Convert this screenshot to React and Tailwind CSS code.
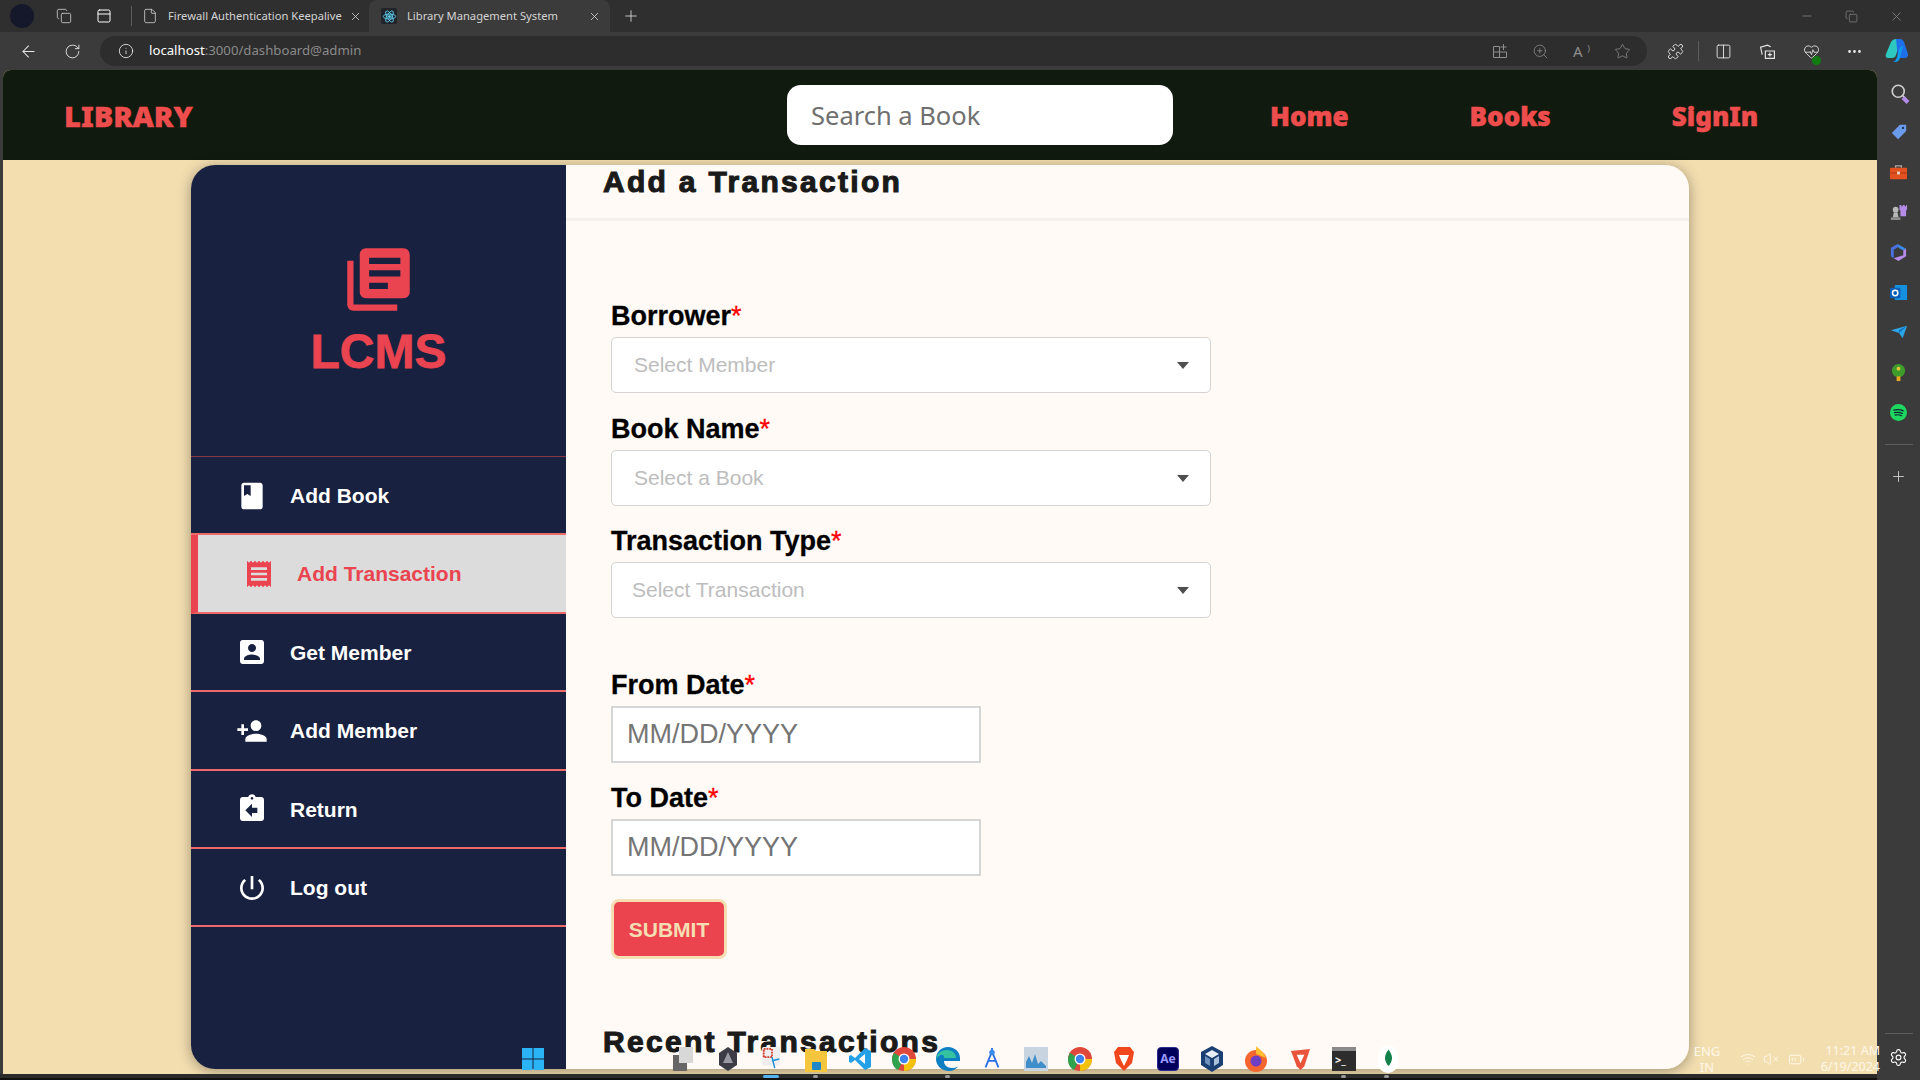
import React from "react";
import { ArrowLeft, RotateCw, Info, ZoomIn, Star, Puzzle, Columns2, HeartPulse, MoreHorizontal, Minus, X, Plus, File, PanelTop, Copy, Search, Wifi, VolumeX, BatteryMedium, Settings } from "lucide-react";

const P = {
  libraryBooks: "M4 6H2v14c0 1.1.9 2 2 2h14v-2H4V6zm16-4H8c-1.1 0-2 .9-2 2v12c0 1.1.9 2 2 2h12c1.1 0 2-.9 2-2V4c0-1.1-.9-2-2-2zm-1 9H9V9h10v2zm-4 4H9v-2h6v2zm4-8H9V5h10v2z",
  book: "M18 2H6c-1.1 0-2 .9-2 2v16c0 1.1.9 2 2 2h12c1.1 0 2-.9 2-2V4c0-1.1-.9-2-2-2zM6 4h5v8l-2.5-1.5L6 12V4z",
  receipt: "M18 17H6v-2h12v2zm0-4H6v-2h12v2zm0-4H6V7h12v2zM3 22l1.5-1.5L6 22l1.5-1.5L9 22l1.5-1.5L12 22l1.5-1.5L15 22l1.5-1.5L18 22l1.5-1.5L21 22V2l-1.5 1.5L18 2l-1.5 1.5L15 2l-1.5 1.5L12 2l-1.5 1.5L9 2 7.5 3.5 6 2 4.5 3.5 3 2v20z",
  accountBox: "M3 5v14c0 1.1.89 2 2 2h14c1.1 0 2-.9 2-2V5c0-1.1-.9-2-2-2H5c-1.11 0-2 .9-2 2zm12 4c0 1.66-1.34 3-3 3s-3-1.34-3-3 1.34-3 3-3 3 1.34 3 3zm-9 8c0-2 4-3.1 6-3.1s6 1.1 6 3.1v1H6v-1z",
  personAdd: "M15 12c2.21 0 4-1.79 4-4s-1.79-4-4-4-4 1.79-4 4 1.79 4 4 4zm-9-2V7H4v3H1v2h3v3h2v-3h3v-2H6zm9 4c-2.67 0-8 1.34-8 4v2h16v-2c0-2.66-5.33-4-8-4z",
  assignmentReturn: "M19 3h-4.18C14.4 1.84 13.3 1 12 1c-1.3 0-2.4.84-2.82 2H5c-1.1 0-2 .9-2 2v14c0 1.1.9 2 2 2h14c1.1 0 2-.9 2-2V5c0-1.1-.9-2-2-2zm-7 0c.55 0 1 .45 1 1s-.45 1-1 1-1-.45-1-1 .45-1 1-1zm4 12h-4v3l-5-5 5-5v3h4v4z",
  power: "M13 3h-2v10h2V3zm4.83 2.17l-1.42 1.42C17.99 7.86 19 9.81 19 12c0 3.87-3.13 7-7 7s-7-3.13-7-7c0-2.19 1.01-4.14 2.58-5.42L6.17 5.17C4.23 6.82 3 9.26 3 12c0 4.97 4.03 9 9 9s9-4.03 9-9c0-2.74-1.23-5.18-3.17-6.83z",
};

function Mi({ d, className }) {
  return (
    <svg viewBox="0 0 24 24" className={className} fill="currentColor" aria-hidden="true">
      <path d={d} />
    </svg>
  );
}

function Chrome({ children, className }) {
  return <div className={"flex items-center justify-center shrink-0 " + className}>{children}</div>;
}

function TopBar() {
  return (
    <div className="h-8 flex items-stretch bg-[#2f2f2f] text-[#d4d4d4] font-['Noto_Sans',sans-serif] text-[11.2px] shrink-0">
      <div className="w-[44px] flex items-center justify-center">
        <div className="w-[24px] h-[24px] rounded-full bg-[#14182a]" />
      </div>
      <Chrome className="w-[40px]"><Copy size={16} strokeWidth={1.2} /></Chrome>
      <Chrome className="w-[44px] ml-[-2px]"><PanelTop size={16} strokeWidth={1.5} className="text-white" /></Chrome>
      <div className="w-px h-[20px] bg-[#5c5c5c] self-center ml-[5px]" />
      <Chrome className="w-[36px]"><File size={16} strokeWidth={1.2} /></Chrome>
      <div className="w-[173px] whitespace-nowrap self-center">Firewall Authentication Keepalive</div>
      <Chrome className="w-[28px]"><X size={13} strokeWidth={1.5} /></Chrome>
      <div className="w-[241px] bg-[#3b3b3b] rounded-t-[8px] flex items-center">
        <div className="w-[16px] h-[16px] ml-[12px] bg-[#20232a] rounded-[2px] flex items-center justify-center">
          <svg viewBox="0 0 24 24" className="w-[15px] h-[15px]" fill="none" stroke="#61dafb" strokeWidth="1.3">
            <ellipse cx="12" cy="12" rx="10" ry="4" />
            <ellipse cx="12" cy="12" rx="10" ry="4" transform="rotate(60 12 12)" />
            <ellipse cx="12" cy="12" rx="10" ry="4" transform="rotate(120 12 12)" />
            <circle cx="12" cy="12" r="1.8" fill="#61dafb" />
          </svg>
        </div>
        <div className="ml-[10px] w-[181px] whitespace-nowrap">Library Management System</div>
        <X size={13} strokeWidth={1.5} />
      </div>
      <Chrome className="w-[42px]"><Plus size={18} strokeWidth={1.2} /></Chrome>
      <div className="flex-1" />
      <div className="flex items-center pr-[16px] text-[#8d8d8d]">
        <Minus size={14} strokeWidth={1.2} />
        <Copy size={13} strokeWidth={1.2} className="ml-[31px]" />
        <X size={15} strokeWidth={1.2} className="ml-[31px]" />
      </div>
    </div>
  );
}

function AddressBar() {
  return (
    <div className="h-[38px] flex items-center bg-[#3b3b3b] text-[#e6e6e6] shrink-0 font-['Noto_Sans',sans-serif]">
      <Chrome className="w-[44px] ml-[6px]"><ArrowLeft size={19} strokeWidth={1.3} /></Chrome>
      <Chrome className="w-[44px]"><RotateCw size={17} strokeWidth={1.3} /></Chrome>
      <div className="ml-[6px] w-[1547px] h-[30px] rounded-full bg-[#2d2d2d] flex items-center">
        <Info size={16} strokeWidth={1.3} className="ml-[18px]" />
        <div className="ml-[15px] text-[13.2px] whitespace-nowrap">
          <span className="text-white">localhost</span>
          <span className="text-[#8a8a8a]">:3000/dashboard@admin</span>
        </div>
        <div className="flex-1" />
        <div className="flex items-center text-[#8e8e8e] pr-[16px] gap-[24px]">
          <svg viewBox="0 0 16 16" className="w-[16px] h-[16px]" fill="none" stroke="currentColor" strokeWidth="1">
            <path d="M1.5 3.5h6v11h-6zM1.5 9h13v5.5h-7M7.5 9v5.5M11.5 1v6M8.500 4h6" />
          </svg>
          <ZoomIn size={17} strokeWidth={1.1} />
          <span className="relative w-[17px] h-[17px] text-[15px] leading-[17px]">
            A<span className="absolute right-0 top-[-3px] text-[9px]">)</span>
          </span>
          <Star size={17} strokeWidth={1.1} />
        </div>
      </div>
      <Chrome className="w-[20px] ml-[18px]"><Puzzle size={17} strokeWidth={1.3} /></Chrome>
      <div className="w-px h-[20px] bg-[#5c5c5c] ml-[13px]" />
      <Chrome className="w-[20px] ml-[14px]"><Columns2 size={17} strokeWidth={1.3} /></Chrome>
      <Chrome className="w-[20px] ml-[24px]">
        <svg viewBox="0 0 16 16" className="w-[17px] h-[17px]" fill="none" stroke="currentColor" strokeWidth="1.1">
          <path d="M3 11 1.5 4 8 2l3 1.5M6 7.5h8.5v7H6zM10.2 9v3.8M8.3 11h3.8" />
        </svg>
      </Chrome>
      <Chrome className="w-[20px] ml-[24px] relative">
        <HeartPulse size={17} strokeWidth={1.2} />
        <span className="absolute right-[0px] bottom-[-5px] w-[9px] h-[9px] rounded-full bg-[#107c10]" />
      </Chrome>
      <Chrome className="w-[20px] ml-[23px]"><MoreHorizontal size={17} strokeWidth={2} /></Chrome>
      <Chrome className="w-[24px] ml-[21px]">
        <svg viewBox="0 0 24 26" className="w-[24px] h-[26px]">
          <path d="M6 4c1-2 3-3 5-3h5l-5 16c-.5 2-2 3-4 3H3C1 20 0 18 1 16z" fill="#2dc8c0" />
          <path d="M11 1h4c2 0 3 1 4 3l4 12c.5 2-1 4-3 4h-7z" fill="#1f6fe8" />
          <path d="M18 8l-3 12c-.5 2-2 4-5 4H6c4 0 5-2 6-5l2-7c.5-2 2-4 4-4z" fill="#0f9af0" />
        </svg>
      </Chrome>
    </div>
  );
}

function NavBar() {
  return (
    <div className="h-[90px] shrink-0 bg-[#101a0e] flex items-center font-['Noto_Sans',sans-serif] font-black text-[#ee4d4d] rounded-t-[8px]">
      <div className="ml-[61px] w-[130px] pt-[1px] text-[29px] whitespace-nowrap [-webkit-text-stroke:0.4px_#ee4d4d]">LIBRARY</div>
      <input
        readOnly
        placeholder="Search a Book"
        className="ml-[593px] w-[386px] h-[60px] rounded-[14px] bg-white pl-[24px] text-[25.5px] font-normal outline-none placeholder:text-[#6f6f6f]"
      />
      <div className="ml-[97px] pt-[2px] flex items-center gap-[121px] text-[26px] whitespace-nowrap [-webkit-text-stroke:0.5px_#ee4d4d]">
        <span>Home</span>
        <span>Books</span>
        <span>SignIn</span>
      </div>
    </div>
  );
}

const items = [
  { label: "Add Book", d: P.book },
  { label: "Add Transaction", d: P.receipt, active: true },
  { label: "Get Member", d: P.accountBox },
  { label: "Add Member", d: P.personAdd },
  { label: "Return", d: P.assignmentReturn },
  { label: "Log out", d: P.power },
];

function Sidebar() {
  return (
    <div className="w-[375px] shrink-0 bg-[#18213f] flex flex-col font-['Liberation_Sans',sans-serif]">
      <div className="h-[292px] shrink-0 border-b border-[#8a3342] flex flex-col items-center pt-[77px] text-[#ea4450]">
        <Mi d={P.libraryBooks} className="w-[75px] h-[75px]" />
        <div className="mt-[7px] text-[48px] font-bold leading-[55px] [-webkit-text-stroke:0.8px_#ea4450]">LCMS</div>
      </div>
      {items.map((it) => (
        <div
          key={it.label}
          className={
            "h-[78.4px] shrink-0 flex items-center pl-[45px] pt-[1px] border-b-2 border-[#ee6a6a] text-[21px] font-bold gap-[22px] " +
            (it.active ? "bg-[#dcdcdc] text-[#ea4450] border-l-[7px] border-l-[#ea4450]" : "text-white")
          }
        >
          <Mi d={it.d} className="w-[32px] h-[32px] shrink-0" />
          <span>{it.label}</span>
        </div>
      ))}
    </div>
  );
}

function Label({ text, className }) {
  return (
    <div className={"text-[27px] font-bold leading-[31px] text-black [-webkit-text-stroke:0.3px_#000] " + (className || "")}>
      {text}<span className="text-[#ff0000] font-normal [-webkit-text-stroke:0.3px_#ff0000]">*</span>
    </div>
  );
}

function SelectBox({ text, className }) {
  return (
    <div className={"w-[600px] h-[56px] rounded-[5px] border border-[#d4d4d4] bg-white flex items-center text-[21px] text-[#bdbdbd] " + className}>
      <span className="flex-1">{text}</span>
      <svg viewBox="0 0 12 7" className="w-[12px] h-[7px] mr-[21px]"><path d="M0 0h12L6 7z" fill="#4f4f4f" /></svg>
    </div>
  );
}

function DateInput({ className }) {
  return (
    <input
      readOnly
      placeholder="MM/DD/YYYY"
      className={"block w-[370px] h-[57px] border-2 border-[#d6d6d6] bg-white pl-[14px] text-[27px] outline-none placeholder:text-[#757575] " + className}
    />
  );
}

function Heading({ children }) {
  return (
    <div className="text-[30px] font-bold leading-[34px] tracking-[2.3px] text-[#1a1a1a] whitespace-nowrap [-webkit-text-stroke:1.1px_#1a1a1a]">
      {children}
    </div>
  );
}

function Main() {
  return (
    <div className="flex-1 bg-[#fffaf5] font-['Liberation_Sans',sans-serif]">
      <div className="h-[56px] pl-[37px] border-b-[3px] border-[#f3f0ee]">
        <Heading>Add a Transaction</Heading>
      </div>
      <div className="pl-[45px] pt-[80px]">
        <Label text="Borrower" />
        <SelectBox text="Select Member" className="mt-[5px] pl-[22px]" />
        <Label text="Book Name" className="mt-[21px]" />
        <SelectBox text="Select a Book" className="mt-[5px] pl-[22px]" />
        <Label text="Transaction Type" className="mt-[20px]" />
        <SelectBox text="Select Transaction" className="mt-[5px] pl-[20px]" />
        <Label text="From Date" className="mt-[52px]" />
        <DateInput className="mt-[5px]" />
        <Label text="To Date" className="mt-[20px]" />
        <DateInput className="mt-[5px]" />
        <button className="block mt-[23px] pt-[1px] w-[116px] h-[60px] rounded-[8px] border-[3px] border-[#f5deb3] bg-[#ec444e] text-[21px] font-bold text-[#f5deb3]">
          SUBMIT
        </button>
      </div>
      <div className="pl-[37px] mt-[66px]">
        <Heading>Recent Transactions</Heading>
      </div>
    </div>
  );
}

function SideRail() {
  return (
    <div className="w-[43px] shrink-0 bg-[#3b3b3b] flex flex-col items-center pt-[2px] text-[#d8d8d8]">
      <div className="h-[40px] flex items-center justify-center relative">
        <Search size={18} strokeWidth={2.2} className="text-[#cfcfcf]" />
        <span className="absolute right-[-1px] bottom-[10px] w-[7px] h-[4px] bg-[#b48be8] rotate-45" />
      </div>
      <div className="h-[40px] flex items-center justify-center">
        <svg viewBox="0 0 20 20" className="w-[18px] h-[18px]"><path d="M11 2h7v7l-9 9-7-7z" fill="#6a9bea" /><circle cx="14.5" cy="5.5" r="1.3" fill="#1c3560" /></svg>
      </div>
      <div className="h-[40px] flex items-center justify-center">
        <svg viewBox="0 0 20 20" className="w-[19px] h-[19px]"><path d="M7 5V3h6v2" stroke="#b0a8a0" strokeWidth="1.5" fill="none" /><rect x="1" y="5" width="18" height="12" rx="1" fill="#e2511f" /><rect x="1" y="10" width="18" height="1" fill="#a93a12" /><rect x="8.5" y="9" width="3" height="3" fill="#e8d8c8" /></svg>
      </div>
      <div className="h-[40px] flex items-center justify-center">
        <svg viewBox="0 0 20 20" className="w-[19px] h-[19px]"><circle cx="7" cy="7" r="3" fill="#b8b8b8" /><path d="M5 10h4l1 5H4z" fill="#b8b8b8" /><rect x="2" y="15" width="10" height="3" rx="1" fill="#8e8e8e" /><path d="M11 2h2v1.5h1.5V2h2v1.5H18V2h1v5l-1 1v6h-6V8l-1-1z" fill="#b48be8" /></svg>
      </div>
      <div className="h-[40px] flex items-center justify-center">
        <svg viewBox="0 0 20 20" className="w-[19px] h-[19px]"><path d="M9 1 2 5v9l3 2V7l5-3z" fill="#4a6fe0" /><path d="M9 1l9 5-3 2-5-3z" fill="#3a8ae8" /><path d="M18 6v8l-8 5-5-3 10-3V8z" fill="#b48be8" /></svg>
      </div>
      <div className="h-[40px] flex items-center justify-center">
        <svg viewBox="0 0 20 20" className="w-[19px] h-[19px]"><rect x="6" y="2" width="13" height="16" rx="1" fill="#1490df" /><rect x="1" y="5" width="11" height="11" rx="1" fill="#0a5eb8" /><circle cx="6.5" cy="10.5" r="2.8" fill="none" stroke="#fff" strokeWidth="1.6" /></svg>
      </div>
      <div className="h-[40px] flex items-center justify-center">
        <svg viewBox="0 0 20 20" className="w-[18px] h-[18px]"><path d="M1 8 19 3l-5 14-4-6z" fill="#2ea6e6" /><path d="M10 11 19 3l-9 5z" fill="#0f6cbd" /></svg>
      </div>
      <div className="h-[40px] flex items-center justify-center">
        <svg viewBox="0 0 20 20" className="w-[19px] h-[19px]"><circle cx="10" cy="8" r="7" fill="#3f9b2c" /><rect x="8" y="14" width="4" height="5" fill="#e5a91c" /><circle cx="10" cy="6" r="2" fill="#e8c93a" /></svg>
      </div>
      <div className="h-[40px] flex items-center justify-center">
        <svg viewBox="0 0 20 20" className="w-[17px] h-[17px]"><circle cx="10" cy="10" r="10" fill="#1ed760" /><path d="M4.5 7.2c4-1 8-.7 11 .9M5.2 10.2c3.4-.8 6.7-.5 9.4.9M6 13c2.6-.6 5.2-.4 7.6.8" stroke="#123" strokeWidth="1.4" fill="none" strokeLinecap="round" /></svg>
      </div>
      <div className="w-[28px] h-px bg-[#5c5c5c] mt-[12px]" />
      <Plus size={17} strokeWidth={1.2} className="mt-[23px]" />
      <div className="flex-1" />
      <div className="w-[28px] h-px bg-[#5c5c5c] mb-[14px]" />
      <Settings size={19} strokeWidth={1.4} className="mb-[13px] text-white" />
    </div>
  );
}

function TaskIcon({ children }) {
  return (
    <div className="w-[44px] h-[30px] flex items-center justify-center shrink-0">{children}</div>
  );
}

function Taskbar() {
  return (
    <div className="absolute left-0 right-[43px] bottom-0 pointer-events-none font-['Noto_Sans',sans-serif]">
      <div className="relative z-10 flex items-center h-[30px] pl-[511px]">
        <TaskIcon>
          <svg viewBox="0 0 24 24" className="w-[24px] h-[24px]"><path d="M1 1h10.5v10.5H1zM12.5 1H23v10.5H12.5zM1 12.5h10.5V23H1zM12.5 12.5H23V23H12.5z" fill="#2bb4f5" /></svg>
        </TaskIcon>
        <div className="w-[107px] h-[30px] flex items-center pl-[14px] text-[12px] text-white/25 gap-[4px] shrink-0">
          <Search size={14} strokeWidth={1.3} /><span>Search</span>
        </div>
        <TaskIcon>
          <div className="relative w-[22px] h-[24px]"><div className="absolute left-0 bottom-0 w-[14px] h-[16px] bg-[#666]" /><div className="absolute right-[2px] top-0 w-[14px] h-[16px] bg-[#d8d8d8]" /></div>
        </TaskIcon>
        <TaskIcon>
          <svg viewBox="0 0 20 24" className="w-[20px] h-[24px]"><path d="M10 0l9 6v12l-9 6-9-6V6z" fill="#3c3c46" /><path d="M10 5l5 11H5z" fill="#9a9aa4" /></svg>
        </TaskIcon>
        <TaskIcon>
          <svg viewBox="0 0 24 28" className="w-[22px] h-[26px]"><rect x="1" y="1" width="20" height="20" rx="2" fill="#eee" /><rect x="3" y="3" width="9" height="9" fill="none" stroke="#d23b2a" strokeWidth="2" strokeDasharray="2 1" /><path d="M12 12l3 12M20 14l-8 2" stroke="#1b8fd6" strokeWidth="1.6" fill="none" /></svg>
        </TaskIcon>
        <TaskIcon>
          <svg viewBox="0 0 24 26" className="w-[24px] h-[26px]"><path d="M1 3h9l2 2h11v21H1z" fill="#f5c63d" /><rect x="8" y="16" width="9" height="8" rx="1" fill="#1d88c8" /></svg>
        </TaskIcon>
        <TaskIcon>
          <svg viewBox="0 0 24 24" className="w-[24px] h-[24px]"><path d="M17 1l6 3v16l-6 3L7 13l-4 3-2-1V9l2-1 4 3zM17 7l-6 5 6 5z" fill="#23a0e6" /></svg>
        </TaskIcon>
        <TaskIcon>
          <svg viewBox="0 0 24 24" className="w-[24px] h-[24px]"><circle cx="12" cy="12" r="12" fill="#e0483c" /><path d="M2 6 12 12 6 23C2 21 0 17 0 12c0-2 1-4 2-6z" fill="#2fa24d" /><path d="M12 12h12c0 7-5 12-12 12z" fill="#f4c20d" /><circle cx="12" cy="12" r="5.5" fill="#fff" /><circle cx="12" cy="12" r="4.2" fill="#3e82f1" /></svg>
        </TaskIcon>
        <TaskIcon>
          <svg viewBox="0 0 24 24" className="w-[24px] h-[24px]"><path d="M24 14H8c0 4 3 7 8 7 2 0 4-.5 6-1.500-2 2.500-5 4.500-9 4.500C6 24 0 19 0 12 0 5 5 0 12 0c7 0 12 5 12 11z" fill="#0f7fc4" /><path d="M0 12C1 6 6 3 11 3c6 0 9 4 9 8H8c1-3-3-6-8 1z" fill="#35c2a1" /></svg>
        </TaskIcon>
        <TaskIcon>
          <svg viewBox="0 0 20 26" className="w-[20px] h-[24px]"><path d="M10 1v4M10 5 3 22M10 5l7 17M5 15h10" stroke="#2b6ee6" strokeWidth="2" fill="none" /><circle cx="10" cy="6" r="3" fill="#3a8ae8" /></svg>
        </TaskIcon>
        <TaskIcon>
          <svg viewBox="0 0 24 24" className="w-[24px] h-[24px]"><rect x="0" y="0" width="24" height="24" fill="#c8d4e0" /><path d="M2 21V15l3-6 3 7 3-9 3 10 3-3 5 5v2z" fill="#3f8ec9" /></svg>
        </TaskIcon>
        <TaskIcon>
          <svg viewBox="0 0 24 24" className="w-[24px] h-[24px]"><circle cx="12" cy="12" r="12" fill="#e0483c" /><path d="M2 6 12 12 6 23C2 21 0 17 0 12c0-2 1-4 2-6z" fill="#2fa24d" /><path d="M12 12h12c0 7-5 12-12 12z" fill="#f4c20d" /><circle cx="12" cy="12" r="5.5" fill="#fff" /><circle cx="12" cy="12" r="4.2" fill="#3e82f1" /></svg>
        </TaskIcon>
        <TaskIcon>
          <svg viewBox="0 0 20 24" className="w-[20px] h-[24px]"><path d="M4 0h12l4 5-2 11-8 8-8-8L0 5z" fill="#f1471d" /><path d="M5 8h10l-2 5-3 6-3-6z" fill="#fff" /></svg>
        </TaskIcon>
        <TaskIcon>
          <div className="w-[22px] h-[24px] rounded-[4px] bg-[#00005b] border border-[#2b2b90] text-[#9999ff] text-[12px] font-bold leading-[22px] text-center">Ae</div>
        </TaskIcon>
        <TaskIcon>
          <svg viewBox="0 0 22 26" className="w-[22px] h-[26px]"><path d="M11 0l11 6v13l-11 7L0 19V6z" fill="#1b3f73" /><path d="M11 4l7 4-7 4-7-4z" fill="#e8eef5" /><path d="M4 10l5 3v7l-5-3z" fill="#6f92bd" /><path d="M18 10l-5 3v7l5-3z" fill="#a9c0da" /></svg>
        </TaskIcon>
        <TaskIcon>
          <svg viewBox="0 0 24 26" className="w-[24px] h-[26px]"><circle cx="12" cy="15" r="11" fill="#f5652f" /><path d="M12 0c3 3 8 6 10 12L12 8z" fill="#ffbf2f" /><circle cx="12" cy="15" r="5.500" fill="#6d3fc4" /></svg>
        </TaskIcon>
        <TaskIcon>
          <svg viewBox="0 0 20 22" className="w-[19px] h-[21px]"><path d="M0 2l20-2-6 18-4 4-4-4z" fill="#e9543a" /><path d="M6 6h8l-4 9z" fill="#fff" /></svg>
        </TaskIcon>
        <TaskIcon>
          <div className="w-[24px] h-[24px] bg-[#2d2d2d] border-t-[4px] border-[#8a8a8a] text-white text-[11px] leading-[18px] pl-[3px] font-bold">&gt;_</div>
        </TaskIcon>
        <TaskIcon>
          <div className="w-[20px] h-[28px] rounded-full bg-white flex items-center justify-center">
            <svg viewBox="0 0 8 22" className="w-[7px] h-[20px]"><path d="M4 0c3 4 4 7 4 10s-2 7-4 9c-2-2-4-6-4-9s1-6 4-10z" fill="#12824a" /></svg>
          </div>
        </TaskIcon>
        <div className="flex-1 flex items-center justify-end text-[#fff8e8] text-[13px] leading-[16px] whitespace-nowrap mr-[-3px]">
          <div className="w-[36px] text-center">ENG<br />IN</div>
          <Wifi size={16} strokeWidth={1.4} className="ml-[15px]" />
          <VolumeX size={16} strokeWidth={1.4} className="ml-[7px]" />
          <BatteryMedium size={17} strokeWidth={1.4} className="ml-[9px]" />
          <div className="w-[65px] ml-[10px] text-right text-[12.5px]">11:21 AM<br />6/19/2024</div>
        </div>
      </div>
      <div className="h-[4px] bg-[#2b2b2b] flex items-center">
        <div className="ml-[763px] w-[16px] h-[3px] rounded-full bg-[#55b4f0]" />
        <div className="ml-[34px] w-[5px] h-[3px] rounded-full bg-[#999]" />
        <div className="ml-[127px] w-[5px] h-[3px] rounded-full bg-[#999]" />
        <div className="ml-[391px] w-[5px] h-[3px] rounded-full bg-[#999]" />
        <div className="ml-[38px] w-[5px] h-[3px] rounded-full bg-[#999]" />
      </div>
      <div className="h-[2px] bg-[#111]" />
    </div>
  );
}

export default function App() {
  return (
    <div className="relative h-screen w-screen overflow-hidden flex flex-col bg-[#3b3b3b]">
      <TopBar />
      <AddressBar />
      <div className="flex flex-1 min-h-0">
        <div className="ml-[3px] flex-1 min-w-0 flex flex-col bg-[#f3deb0] rounded-t-[8px]">
          <NavBar />
          <div className="flex-1 min-h-0 pt-[5px] pl-[188px]">
            <div className="w-[1498px] h-[904px] flex rounded-[24px] overflow-hidden shadow-[0_2px_14px_rgba(0,0,0,0.35)]">
              <Sidebar />
              <Main />
            </div>
          </div>
        </div>
        <SideRail />
      </div>
      <Taskbar />
    </div>
  );
}
